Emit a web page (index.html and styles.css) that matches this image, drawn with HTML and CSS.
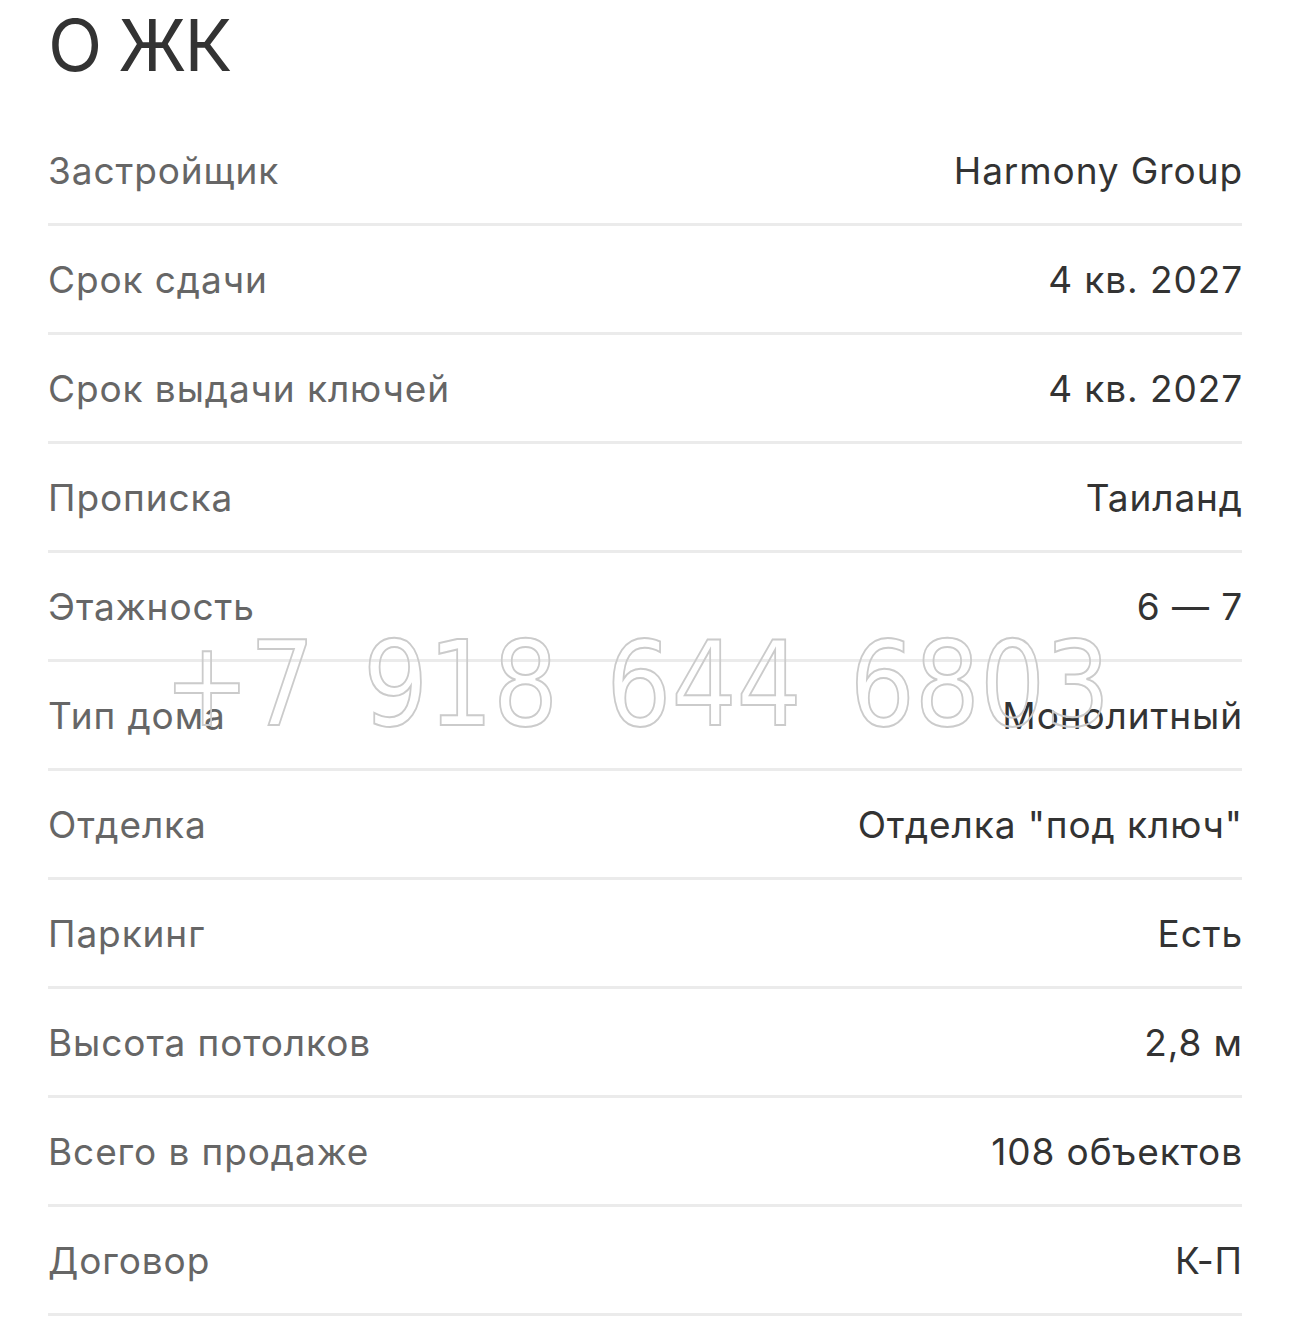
FILE: index.html
```html
<!DOCTYPE html>
<html lang="ru">
<head>
    <meta charset="UTF-8">
    <meta name="viewport" content="width=device-width, initial-scale=1.0">
    <title>О ЖК</title>
    <link rel="stylesheet" href="styles.css">
</head>
<body>
    <div class="container">
        <h1 class="title">О ЖК</h1>

        <div class="params">
            <div class="param-row">
                <div class="param-label">Застройщик</div>
                <div class="param-value">Harmony Group</div>
            </div>
            <div class="param-row">
                <div class="param-label">Срок сдачи</div>
                <div class="param-value">4 кв. 2027</div>
            </div>
            <div class="param-row">
                <div class="param-label">Срок выдачи ключей</div>
                <div class="param-value">4 кв. 2027</div>
            </div>
            <div class="param-row">
                <div class="param-label">Прописка</div>
                <div class="param-value">Таиланд</div>
            </div>
            <div class="param-row">
                <div class="param-label">Этажность</div>
                <div class="param-value">6 — 7</div>
            </div>
            <div class="param-row">
                <div class="param-label">Тип дома</div>
                <div class="param-value">Монолитный</div>
            </div>
            <div class="param-row">
                <div class="param-label">Отделка</div>
                <div class="param-value">Отделка "под ключ"</div>
            </div>
            <div class="param-row">
                <div class="param-label">Паркинг</div>
                <div class="param-value">Есть</div>
            </div>
            <div class="param-row">
                <div class="param-label">Высота потолков</div>
                <div class="param-value">2,8 м</div>
            </div>
            <div class="param-row">
                <div class="param-label">Всего в продаже</div>
                <div class="param-value">108 объектов</div>
            </div>
            <div class="param-row">
                <div class="param-label">Договор</div>
                <div class="param-value">К-П</div>
            </div>
        </div>

        <div class="watermark">+7 918 644 6803</div>
    </div>
</body>
</html>
```

FILE: styles.css
```css
* {
    margin: 0;
    padding: 0;
    box-sizing: border-box;
}

body {
    font-family: 'Inter', 'Liberation Sans', sans-serif;
    background: #fff;
    padding: 0 48px;
}

.container {
    position: relative;
}

.title {
    font-size: 71px;
    font-weight: 400;
    line-height: 71px;
    letter-spacing: -2px;
    color: #333;
    margin-top: 10px;
    margin-bottom: 36px;
}

.param-row {
    display: flex;
    justify-content: space-between;
    align-items: center;
    height: 109px;
    border-bottom: 3px solid #ebebeb;
    font-size: 37px;
    letter-spacing: 0.9px;
}

.param-label {
    color: #666;
}

.param-value {
    color: #333;
    margin-right: -1px;
}

/* водяной знак поверх списка */
.watermark {
    position: absolute;
    left: 116px;
    top: 615px;
    font-family: 'DejaVu Sans', sans-serif;
    font-size: 118px;
    line-height: 118px;
    word-spacing: 18px;
    color: transparent;
    -webkit-text-stroke: 2px #cbcbcb;
    white-space: nowrap;
    transform: scaleX(0.867);
    transform-origin: left top;
    pointer-events: none;
}
```
